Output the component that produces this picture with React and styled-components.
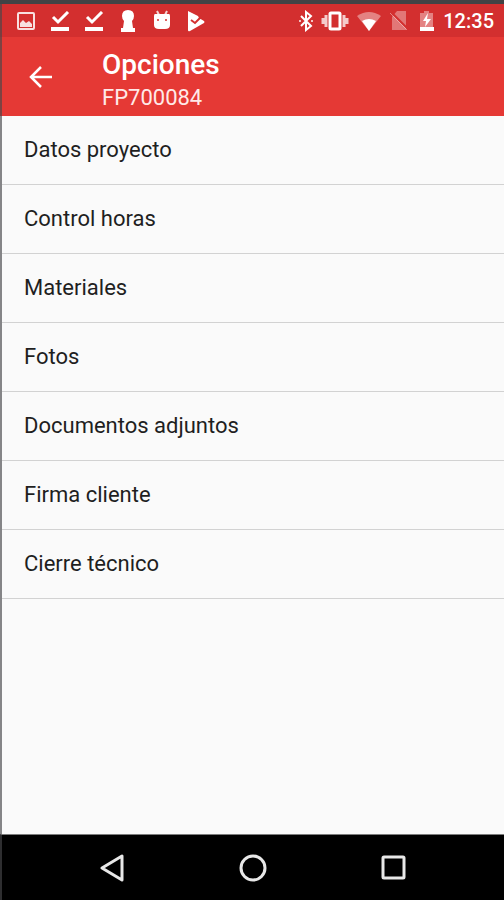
import React from "react";
import styled, { createGlobalStyle } from "styled-components";

const GlobalStyle = createGlobalStyle`
  * {
    box-sizing: border-box;
  }
  body {
    margin: 0;
    background: #fafafa;
    font-family: Roboto, "Noto Sans", sans-serif;
  }
`;

const Screen = styled.div`
  min-height: 100vh;
  display: flex;
  flex-direction: column;
  border-top: 4px solid #424345;
`;
const Edge = styled.div`
  border-left: 2px solid rgba(70, 70, 74, 0.65);
`;
const StatusBar = styled(Edge)`
  height: 33px;
  padding: 0 10px 0 14px;
  display: flex;
  justify-content: space-between;
  align-items: center;
  background-color: #d32f2f;
  color: #ffffff;
`;
const StatusGroup = styled.div`
  display: flex;
  align-items: center;
  gap: ${(props) => props.$gap};
`;
const Icon = styled.svg`
  display: block;
  flex: none;
  fill: currentColor;
`;
const Clock = styled.time`
  font-size: 20px;
  line-height: 24px;
  font-weight: 500;
`;
const Header = styled(Edge).attrs({ as: "header" })`
  height: 79px;
  padding-left: 25px;
  display: flex;
  align-items: center;
  gap: 47px;
  background-color: #e53935;
  color: #ffffff;
`;
const BackButton = styled.button`
  padding: 0;
  border: none;
  background: none;
  color: inherit;
  cursor: pointer;
`;
const Heading = styled.div`
  padding-top: 8px;
`;
const Title = styled.h1`
  margin: 0;
  font-size: 28px;
  line-height: 34px;
  font-weight: 500;
`;
const Subtitle = styled.p`
  margin: 0;
  font-size: 22px;
  line-height: 32px;
  color: #ffe9e8;
`;
const Content = styled(Edge).attrs({ as: "main" })`
  flex: 1;
  background-color: #fafafa;
`;
const Menu = styled.ul`
  margin: 0;
  padding: 0;
  list-style: none;
`;
const MenuItem = styled.li`
  border-bottom: 1px solid #d2d2d2;
`;
const MenuLink = styled.a`
  display: block;
  padding: 18px 22px;
  font-size: 22px;
  line-height: 32px;
  color: #1f1f1f;
  text-decoration: none;
`;
const NavBar = styled(Edge).attrs({ as: "nav" })`
  height: 66px;
  display: flex;
  justify-content: center;
  border-top: 1px solid #7c7c7c;
  background-color: #000000;
`;
const NavButton = styled.button`
  width: 28%;
  padding: 0;
  display: flex;
  justify-content: center;
  align-items: center;
  border: none;
  background: none;
  color: #e8e8e8;
  cursor: pointer;
`;

const options = [
  "Datos proyecto",
  "Control horas",
  "Materiales",
  "Fotos",
  "Documentos adjuntos",
  "Firma cliente",
  "Cierre técnico",
];

const ImageIcon = () => (
  <Icon width="20" height="20" viewBox="0 0 20 20" opacity="0.85">
    <rect x="2" y="2" width="16" height="16" rx="1" fill="none" stroke="currentColor" strokeWidth="2" />
    <path d="M4 16v-4l3-3 3 3 3-2 3 3v3z" />
  </Icon>
);

const DoneIcon = () => (
  <Icon width="20" height="20" viewBox="0 0 20 20">
    <path d="M3 6l5 5 10-10" fill="none" stroke="currentColor" strokeWidth="3" />
    <path d="M1 16h18v4H1z" />
  </Icon>
);

const KeyholeIcon = () => (
  <Icon width="20" height="24" viewBox="0 0 20 24">
    <path d="M10 1q6 0 6 6 0 3-2 5l1 7h2v4H3v-4h2l1-7q-2-2-2-5 0-6 6-6z" />
  </Icon>
);

const RobotIcon = () => (
  <Icon width="20" height="22" viewBox="0 0 20 22">
    <path d="M5 1l2 4M15 1l-2 4" stroke="currentColor" strokeWidth="2" opacity="0.8" />
    <path d="M3 4h14q1 0 1 2v9q0 4-5 4H7q-5 0-5-4V6q0-2 1-2z" />
    <circle cx="6" cy="10" r="1" fill="#d32f2f" />
    <circle cx="14" cy="10" r="1" fill="#d32f2f" />
  </Icon>
);

const PlayCheckIcon = () => (
  <Icon width="20" height="22" viewBox="0 0 20 22">
    <path d="M2 1l10 5 1 2 5 3q1 1 0 2L4 21q-2 1-2-1z" />
    <path d="M5 10l4 3 7-7" fill="none" stroke="#d32f2f" strokeWidth="2" />
  </Icon>
);

const BluetoothIcon = () => (
  <Icon width="16" height="22" viewBox="0 0 16 22">
    <path d="M3 6l10 10-5 4V2l5 4L3 16" fill="none" stroke="currentColor" strokeWidth="2" />
    <path d="M1 10h2v2H1zM13 10h2v2h-2z" opacity="0.7" />
  </Icon>
);

const VibrateIcon = () => (
  <Icon width="28" height="22" viewBox="0 0 28 22">
    <rect x="9" y="3" width="10" height="16" rx="1" fill="none" stroke="currentColor" strokeWidth="3" />
    <path d="M5 5v12M23 5v12M2 8v6M26 8v6" stroke="currentColor" strokeWidth="3" opacity="0.75" />
  </Icon>
);

const WifiIcon = () => (
  <Icon width="26" height="20" viewBox="0 0 26 20">
    <path d="M1 5q12-8 24 0L13 20z" opacity="0.4" />
    <path d="M6 10q7-4 14 0l-7 10z" />
  </Icon>
);

const NoSimIcon = () => (
  <Icon width="20" height="22" viewBox="0 0 20 22">
    <path d="M8 1h9v19H3V7z" opacity="0.35" />
    <path d="M2 2l17 17" stroke="#d32f2f" strokeWidth="2" />
    <path d="M1 3l17 17" stroke="currentColor" strokeWidth="1" opacity="0.4" />
  </Icon>
);

const BatteryIcon = () => (
  <Icon width="20" height="22" viewBox="0 0 20 22">
    <path d="M8 1h5v2h4v14H4V3h4z" opacity="0.4" />
    <path d="M12 3l-5 8h3l-1 6 6-8h-4zM4 17h14v4H4z" />
  </Icon>
);

const App = () => {
  return (
    <Screen>
      <GlobalStyle />
      <StatusBar>
        <StatusGroup $gap="14px">
          <ImageIcon />
          <DoneIcon />
          <DoneIcon />
          <KeyholeIcon />
          <RobotIcon />
          <PlayCheckIcon />
        </StatusGroup>
        <StatusGroup $gap="7px">
          <BluetoothIcon />
          <VibrateIcon />
          <WifiIcon />
          <NoSimIcon />
          <BatteryIcon />
          <Clock>12:35</Clock>
        </StatusGroup>
      </StatusBar>
      <Header>
        <BackButton aria-label="Volver">
          <Icon width="28" height="28" viewBox="0 0 28 28">
            <path d="M25 14H4M14 4L4 14l10 10" fill="none" stroke="currentColor" strokeWidth="2.500" />
          </Icon>
        </BackButton>
        <Heading>
          <Title>Opciones</Title>
          <Subtitle>FP700084</Subtitle>
        </Heading>
      </Header>
      <Content>
        <Menu>
          {options.map((option) => (
            <MenuItem key={option}>
              <MenuLink href="#">{option}</MenuLink>
            </MenuItem>
          ))}
        </Menu>
      </Content>
      <NavBar>
        <NavButton aria-label="Atrás">
          <Icon width="28" height="28" viewBox="0 0 28 28">
            <path d="M24 2v24L4 14z" fill="none" stroke="currentColor" strokeWidth="3" strokeLinejoin="round" />
          </Icon>
        </NavButton>
        <NavButton aria-label="Inicio">
          <Icon width="28" height="28" viewBox="0 0 28 28">
            <circle cx="14" cy="14" r="12" fill="none" stroke="currentColor" strokeWidth="3" />
          </Icon>
        </NavButton>
        <NavButton aria-label="Recientes">
          <Icon width="28" height="28" viewBox="0 0 28 28">
            <rect x="3" y="3" width="21" height="21" rx="1" fill="none" stroke="currentColor" strokeWidth="3" />
          </Icon>
        </NavButton>
      </NavBar>
    </Screen>
  );
};

export default App;
